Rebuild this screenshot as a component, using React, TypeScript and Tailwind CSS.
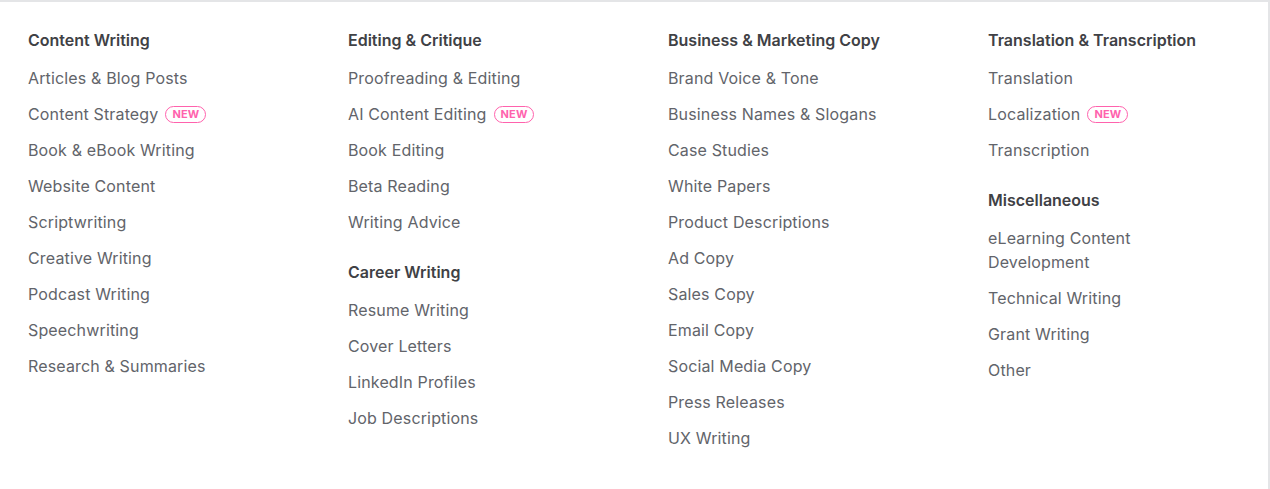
import React from "react";

type Item = { label: string; isNew?: boolean };
type Group = { title: string; items: Item[] };

const columns: Group[][] = [
  [
    {
      title: "Content Writing",
      items: [
        { label: "Articles & Blog Posts" },
        { label: "Content Strategy", isNew: true },
        { label: "Book & eBook Writing" },
        { label: "Website Content" },
        { label: "Scriptwriting" },
        { label: "Creative Writing" },
        { label: "Podcast Writing" },
        { label: "Speechwriting" },
        { label: "Research & Summaries" },
      ],
    },
  ],
  [
    {
      title: "Editing & Critique",
      items: [
        { label: "Proofreading & Editing" },
        { label: "AI Content Editing", isNew: true },
        { label: "Book Editing" },
        { label: "Beta Reading" },
        { label: "Writing Advice" },
      ],
    },
    {
      title: "Career Writing",
      items: [
        { label: "Resume Writing" },
        { label: "Cover Letters" },
        { label: "LinkedIn Profiles" },
        { label: "Job Descriptions" },
      ],
    },
  ],
  [
    {
      title: "Business & Marketing Copy",
      items: [
        { label: "Brand Voice & Tone" },
        { label: "Business Names & Slogans" },
        { label: "Case Studies" },
        { label: "White Papers" },
        { label: "Product Descriptions" },
        { label: "Ad Copy" },
        { label: "Sales Copy" },
        { label: "Email Copy" },
        { label: "Social Media Copy" },
        { label: "Press Releases" },
        { label: "UX Writing" },
      ],
    },
  ],
  [
    {
      title: "Translation & Transcription",
      items: [
        { label: "Translation" },
        { label: "Localization", isNew: true },
        { label: "Transcription" },
      ],
    },
    {
      title: "Miscellaneous",
      items: [
        { label: "eLearning Content Development" },
        { label: "Technical Writing" },
        { label: "Grant Writing" },
        { label: "Other" },
      ],
    },
  ],
];

function NewBadge() {
  return (
    <span className="ml-[7px] inline-flex h-[17px] items-center rounded-full border border-[#ff62ad] px-[6px] text-[11px] font-bold leading-none text-[#ff62ad]">
      NEW
    </span>
  );
}

export default function App() {
  return (
    <div
      className="box-border h-[489px] w-[1270px] border-t-2 border-r-2 border-[#e4e5e7] bg-white pl-[28px] pt-[26px]"
      style={{ fontFamily: "Inter, 'Noto Sans', sans-serif" }}
    >
      <div className="grid grid-cols-[260px_260px_260px_260px] gap-x-[60px]">
        {columns.map((groups, ci) => (
          <div key={ci} className="flex flex-col gap-[26px]">
            {groups.map((g) => (
              <div key={g.title} className="flex flex-col">
                <h3 className="mb-[14px] text-[16px] font-semibold leading-[24px] text-[#404145]">
                  {g.title}
                </h3>
                <ul className="flex flex-col gap-[12px]">
                  {g.items.map((it) => (
                    <li
                      key={it.label}
                      className="flex max-w-[215px] items-center text-[16px] leading-[24px] tracking-[0.15px] text-[#62646a]"
                    >
                      <span>{it.label}</span>
                      {it.isNew && <NewBadge />}
                    </li>
                  ))}
                </ul>
              </div>
            ))}
          </div>
        ))}
      </div>
    </div>
  );
}
